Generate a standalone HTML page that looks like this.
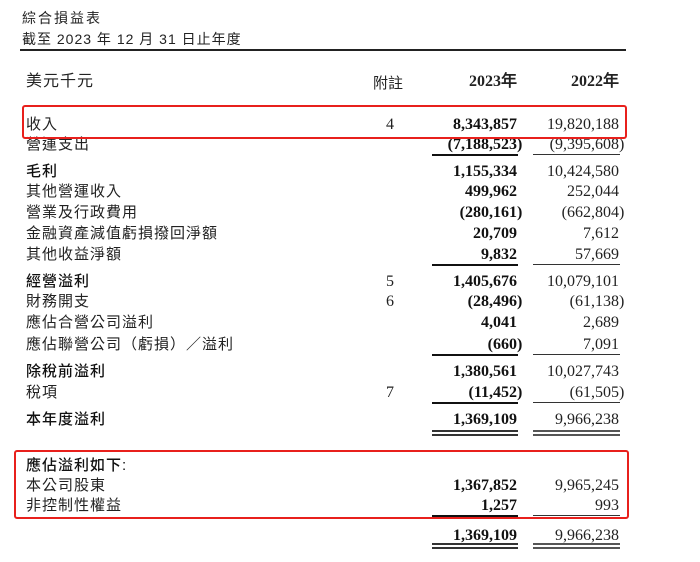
<!DOCTYPE html>
<html><head><meta charset="utf-8"><style>
body{margin:0;width:700px;height:562px;background:#fff;position:relative;overflow:hidden;font-family:"Liberation Sans","Noto Sans CJK TC",sans-serif;color:#222}
.t{position:absolute;white-space:nowrap}
.l{left:26px;font-size:15px;letter-spacing:1px;line-height:20px}
.b{font-weight:500;color:#111}
.n{font-family:"Liberation Serif",serif;font-size:16px;line-height:20px;text-align:right}
.c1{right:183px;font-weight:bold;color:#111}
.c2{right:81px;color:#222}
.p{position:absolute;left:100%}
.nt{left:386px;font-family:"Liberation Serif",serif;font-size:16px;line-height:20px}
.u{position:absolute;height:0}
.u1{left:432px;width:86px;border-top:2px solid #111}
.u2{left:533px;width:87px;border-top:1px solid #333}
.d1{left:432px;width:86px;height:2px;border-top:2px solid #333;border-bottom:2px solid #333}
.d2{left:533px;width:87px;height:2px;border-top:2px solid #555;border-bottom:2px solid #555}
.box{position:absolute;border:2px solid #e8201c;border-radius:3px}
</style></head><body>
<div class="t" style="left:22px;top:8px;font-size:14px;letter-spacing:2px">綜合損益表</div>
<div class="t" style="left:22px;top:29px;font-size:14px;letter-spacing:1px">截至 2023 年 12 月 31 日止年度</div>
<div class="u" style="left:20px;top:49px;width:606px;border-top:2px solid #222"></div>
<div class="t l" style="top:72px;font-size:16px">美元千元</div>
<div class="t" style="left:373px;top:72px;font-size:15px">附註</div>
<div class="t n" style="right:183px;top:72px;font-weight:bold">2023年</div>
<div class="t n" style="right:81px;top:72px;font-weight:bold">2022年</div>

<div class="t l" style="top:115px">收入</div>
<div class="t nt" style="top:115px">4</div>
<div class="t n c1" style="top:115px">8,343,857</div>
<div class="t n c2" style="top:115px">19,820,188</div>
<div class="t l" style="top:135px">營運支出</div>
<div class="t n c1" style="top:135px">(7,188,523<span class="p">)</span></div>
<div class="t n c2" style="top:135px">(9,395,608<span class="p">)</span></div>
<div class="u u1" style="top:154px"></div><div class="u u2" style="top:154px"></div>

<div class="t l b" style="top:162px">毛利</div>
<div class="t n c1" style="top:162px">1,155,334</div>
<div class="t n c2" style="top:162px">10,424,580</div>
<div class="t l" style="top:182px">其他營運收入</div>
<div class="t n c1" style="top:182px">499,962</div>
<div class="t n c2" style="top:182px">252,044</div>
<div class="t l" style="top:203px">營業及行政費用</div>
<div class="t n c1" style="top:203px">(280,161<span class="p">)</span></div>
<div class="t n c2" style="top:203px">(662,804<span class="p">)</span></div>
<div class="t l" style="top:224px">金融資產減值虧損撥回淨額</div>
<div class="t n c1" style="top:224px">20,709</div>
<div class="t n c2" style="top:224px">7,612</div>
<div class="t l" style="top:245px">其他收益淨額</div>
<div class="t n c1" style="top:245px">9,832</div>
<div class="t n c2" style="top:245px">57,669</div>
<div class="u u1" style="top:264px"></div><div class="u u2" style="top:264px"></div>

<div class="t l b" style="top:272px">經營溢利</div>
<div class="t nt" style="top:272px">5</div>
<div class="t n c1" style="top:272px">1,405,676</div>
<div class="t n c2" style="top:272px">10,079,101</div>
<div class="t l" style="top:292px">財務開支</div>
<div class="t nt" style="top:292px">6</div>
<div class="t n c1" style="top:292px">(28,496<span class="p">)</span></div>
<div class="t n c2" style="top:292px">(61,138<span class="p">)</span></div>
<div class="t l" style="top:313px">應佔合營公司溢利</div>
<div class="t n c1" style="top:313px">4,041</div>
<div class="t n c2" style="top:313px">2,689</div>
<div class="t l" style="top:335px">應佔聯營公司（虧損）／溢利</div>
<div class="t n c1" style="top:335px">(660<span class="p">)</span></div>
<div class="t n c2" style="top:335px">7,091</div>
<div class="u u1" style="top:354px"></div><div class="u u2" style="top:354px"></div>

<div class="t l b" style="top:362px">除稅前溢利</div>
<div class="t n c1" style="top:362px">1,380,561</div>
<div class="t n c2" style="top:362px">10,027,743</div>
<div class="t l" style="top:383px">稅項</div>
<div class="t nt" style="top:383px">7</div>
<div class="t n c1" style="top:383px">(11,452<span class="p">)</span></div>
<div class="t n c2" style="top:383px">(61,505<span class="p">)</span></div>
<div class="u u1" style="top:402px"></div><div class="u u2" style="top:402px"></div>

<div class="t l b" style="top:410px">本年度溢利</div>
<div class="t n c1" style="top:410px">1,369,109</div>
<div class="t n c2" style="top:410px">9,966,238</div>
<div class="u d1" style="top:430px"></div><div class="u d2" style="top:430px"></div>

<div class="t l b" style="top:456px">應佔溢利如下:</div>
<div class="t l" style="top:476px">本公司股東</div>
<div class="t n c1" style="top:476px">1,367,852</div>
<div class="t n c2" style="top:476px">9,965,245</div>
<div class="t l" style="top:496px">非控制性權益</div>
<div class="t n c1" style="top:496px">1,257</div>
<div class="t n c2" style="top:496px">993</div>
<div class="u u1" style="top:515px"></div><div class="u u2" style="top:515px"></div>

<div class="t n c1" style="top:526px">1,369,109</div>
<div class="t n c2" style="top:526px">9,966,238</div>
<div class="u d1" style="top:543px"></div><div class="u d2" style="top:543px"></div>

<div class="box" style="left:22px;top:105px;width:601px;height:30px"></div>
<div class="box" style="left:14px;top:450px;width:611px;height:65px"></div>
</body></html>
